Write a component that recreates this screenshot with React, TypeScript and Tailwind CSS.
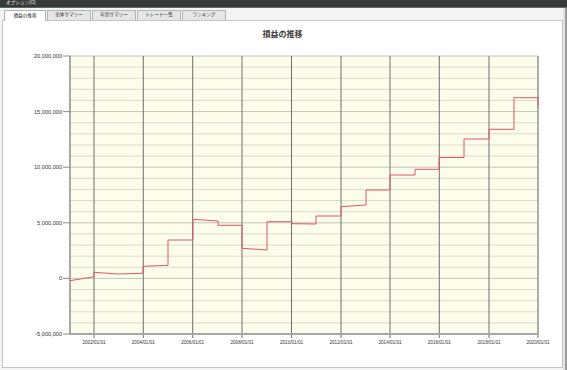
const font = { fontFamily: '"Liberation Sans", "Noto Sans CJK JP", sans-serif' };

const tabs = ["損益の推移", "全体サマリー", "年別サマリー", "トレード一覧", "ランキング"];

const yTop = 56;
const yBottom = 334;
const xLeft = 70;
const xRight = 538;
const step = (yBottom - yTop) / 25;

const yLabels = [
  { v: "20,000,000", y: 56 },
  { v: "15,000,000", y: 111.6 },
  { v: "10,000,000", y: 167.2 },
  { v: "5,000,000", y: 222.8 },
  { v: "0", y: 278.4 },
  { v: "-5,000,000", y: 334 },
];

const xLabels = [
  { v: "2002/01/01", x: 94 },
  { v: "2004/01/01", x: 143.3 },
  { v: "2006/01/01", x: 192.7 },
  { v: "2008/01/01", x: 242 },
  { v: "2010/01/01", x: 291.5 },
  { v: "2012/01/01", x: 341 },
  { v: "2014/01/01", x: 390 },
  { v: "2016/01/01", x: 439.3 },
  { v: "2018/01/01", x: 489 },
  { v: "2020/01/01", x: 538 },
];

const points = [
  [70, 280.7], [94, 276.7], [94, 272.3], [118, 274], [143, 273.3], [143, 266.3],
  [168, 265.3], [168, 240], [193, 240], [193, 219.3], [218, 221], [218, 225.3],
  [242, 225.3], [242, 248.3], [267, 250], [267, 221.7], [292, 221.7], [292, 223.7],
  [316, 224], [316, 216], [341, 216], [341, 206.7], [366, 205], [366, 190],
  [390, 190], [390, 175], [415, 175], [415, 169.3], [439, 169.3], [439, 157.5],
  [464, 157.5], [464, 139], [489, 139], [489, 129.3], [514, 129.3], [514, 97.7],
  [538, 97.7], [538, 106],
];

function Chart() {
  const hLines = Array.from({ length: 26 }, (_, i) => yTop + i * step);
  return (
    <svg width={559} height={316} className="block shrink-0">
      <g transform="translate(-3,-49)">
        <rect x={xLeft} y={yTop} width={xRight - xLeft} height={yBottom - yTop} fill="#fdfdec" />
        {hLines.map((y, i) => (
          <line
            key={i}
            x1={xLeft}
            x2={xRight}
            y1={y}
            y2={y}
            stroke={i % 5 === 0 ? "#c4c4b8" : "#dcdccc"}
            strokeWidth={1}
          />
        ))}
        {xLabels.map((l) => (
          <line key={l.v} x1={l.x} x2={l.x} y1={yTop} y2={yBottom + 4} stroke="#6e6e6e" strokeWidth={1} />
        ))}
        <line x1={xLeft} x2={xLeft} y1={yTop} y2={yBottom + 1} stroke="#a8a8a8" strokeWidth={2} />
        <line x1={xLeft - 1} x2={xRight + 1} y1={yBottom} y2={yBottom} stroke="#a8a8a8" strokeWidth={2} />
        <line x1={xRight} x2={xRight} y1={yTop} y2={yBottom} stroke="#a8a8a8" strokeWidth={1.5} />
        {yLabels.map((l) => (
          <g key={l.v}>
            <line x1={63} x2={xLeft} y1={l.y} y2={l.y} stroke="#8a8a8a" strokeWidth={1} />
            <text x={62} y={l.y + 2} textAnchor="end" fontSize={5.6} fill="#333" style={font}>
              {l.v}
            </text>
          </g>
        ))}
        {xLabels.map((l) => (
          <text key={l.v} x={l.x} y={343.5} textAnchor="middle" fontSize={4.6} fill="#333" style={font}>
            {l.v}
          </text>
        ))}
        <polyline
          points={points.map((p) => p.join(",")).join(" ")}
          fill="none"
          stroke="#e05563"
          strokeWidth={1}
        />
      </g>
    </svg>
  );
}

export default function App() {
  return (
    <div className="w-[567px] h-[370px] flex flex-col bg-[#f4f4f4] overflow-hidden" style={font}>
      <div className="h-[8px] shrink-0 bg-[#383a39] border-b border-[#5a6a64] flex items-center px-[6px]">
        <span className="text-[4.6px] leading-none text-[#e8e8e8]">オプション(O)</span>
      </div>
      <div className="flex-1 flex min-h-0">
        <div className="flex-1 flex flex-col pl-[2px] pb-[2px]">
          <div className="h-[12px] shrink-0 flex items-end pl-[2px] gap-[1px] pt-[1px]">
            {tabs.map((t, i) => (
              <div
                key={t}
                className={
                  i === 0
                    ? "w-[42px] h-[11px] bg-white border border-b-0 border-[#b0b0b0] flex items-center justify-center text-[4.6px] text-[#222] -mb-[1px] relative z-10"
                    : "w-[44px] h-[10px] bg-[#e6e6e6] border border-b-0 border-[#b4b4b4] flex items-center justify-center text-[4.6px] text-[#333]"
                }
              >
                {t}
              </div>
            ))}
          </div>
          <div className="flex-1 bg-white border border-[#c4c4c4] flex flex-col overflow-hidden">
            <div className="h-[28px] shrink-0 flex justify-center pt-[9px]">
              <span className="text-[8px] leading-[10px] font-bold text-[#3a3a3a]">損益の推移</span>
            </div>
            <Chart />
          </div>
        </div>
        <div className="w-[4px] bg-[#e4e4e4] border-r-2 border-[#9a9a9a]" />
      </div>
    </div>
  );
}
